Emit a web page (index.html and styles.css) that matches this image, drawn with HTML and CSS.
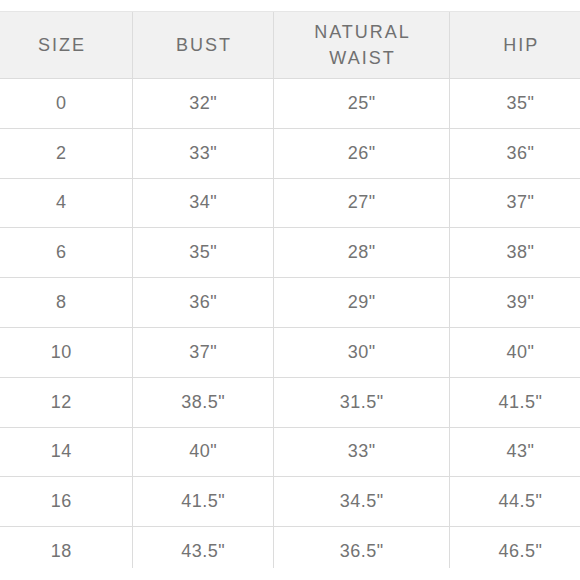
FILE: index.html
```html
<!DOCTYPE html>
<html>
<head>
<meta charset="utf-8">
<link rel="stylesheet" href="styles.css">
</head>
<body>
<div class="frame">
<table class="chart">
<colgroup><col class="c1"><col class="c2"><col class="c3"><col class="c4"></colgroup>
<thead>
<tr><th>SIZE</th><th>BUST</th><th>NATURAL<br>WAIST</th><th>HIP</th></tr>
</thead>
<tbody>
<tr><td>0</td><td>32"</td><td>25"</td><td>35"</td></tr>
<tr><td>2</td><td>33"</td><td>26"</td><td>36"</td></tr>
<tr><td>4</td><td>34"</td><td>27"</td><td>37"</td></tr>
<tr><td>6</td><td>35"</td><td>28"</td><td>38"</td></tr>
<tr><td>8</td><td>36"</td><td>29"</td><td>39"</td></tr>
<tr><td>10</td><td>37"</td><td>30"</td><td>40"</td></tr>
<tr><td>12</td><td>38.5"</td><td>31.5"</td><td>41.5"</td></tr>
<tr><td>14</td><td>40"</td><td>33"</td><td>43"</td></tr>
<tr><td>16</td><td>41.5"</td><td>34.5"</td><td>44.5"</td></tr>
<tr><td>18</td><td>43.5"</td><td>36.5"</td><td>46.5"</td></tr>
</tbody>
</table>
</div>
</body>
</html>
```
FILE: styles.css
```css
html, body { margin: 0; padding: 0; background: #fff; }
.frame {
  margin-top: 11px;
  height: 557px;
  overflow: hidden;
  width: 580px;
}
.chart {
  width: 601px;
  margin-left: -11px;
  border-collapse: collapse;
  table-layout: fixed;
  font-family: "Liberation Sans", Arial, sans-serif;
  color: #737373;
}
.c1 { width: 143px; }
.c2 { width: 141px; }
.c3 { width: 176px; }
.c4 { width: 141px; }
.chart th {
  background: #f1f1f1;
  height: 66px;
  padding: 0 0 0 2px;
  font-weight: normal;
  font-size: 18px;
  letter-spacing: 2px;
  line-height: 26px;
  color: #707070;
  border-left: 1px solid #dcdcdc;
  border-top: 1px solid #e6e6e6;
  border-bottom: 1px solid #dcdcdc;
}
.chart td {
  height: 48.8px;
  padding: 0 0 0 0.5px;
  text-align: center;
  font-size: 18px;
  letter-spacing: 0.5px;
  border-left: 1px solid #dcdcdc;
  border-bottom: 1px solid #dcdcdc;
}
```
